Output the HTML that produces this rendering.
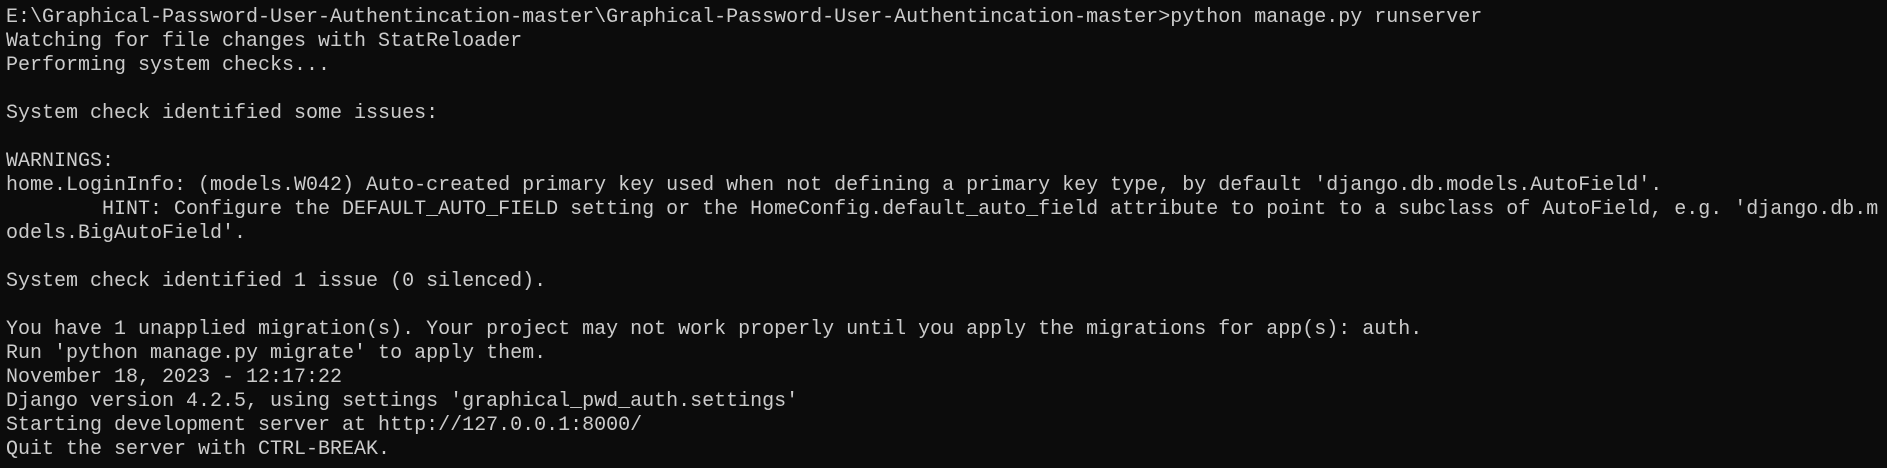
<!DOCTYPE html>
<html><head><meta charset="utf-8"><style>
html,body{margin:0;padding:0;background:#0c0c0c;width:1887px;height:468px;overflow:hidden}
pre{margin:0;padding:6px 0 0 6px;font-family:"Liberation Mono","DejaVu Sans Mono",monospace;font-size:20px;line-height:24px;color:#cccccc;white-space:pre}
</style></head><body><pre>E:\Graphical-Password-User-Authentincation-master\Graphical-Password-User-Authentincation-master&gt;python manage.py runserver
Watching for file changes with StatReloader
Performing system checks...

System check identified some issues:

WARNINGS:
home.LoginInfo: (models.W042) Auto-created primary key used when not defining a primary key type, by default 'django.db.models.AutoField'.
        HINT: Configure the DEFAULT_AUTO_FIELD setting or the HomeConfig.default_auto_field attribute to point to a subclass of AutoField, e.g. 'django.db.m
odels.BigAutoField'.

System check identified 1 issue (0 silenced).

You have 1 unapplied migration(s). Your project may not work properly until you apply the migrations for app(s): auth.
Run 'python manage.py migrate' to apply them.
November 18, 2023 - 12:17:22
Django version 4.2.5, using settings 'graphical_pwd_auth.settings'
Starting development server at http://127.0.0.1:8000/
Quit the server with CTRL-BREAK.</pre></body></html>
